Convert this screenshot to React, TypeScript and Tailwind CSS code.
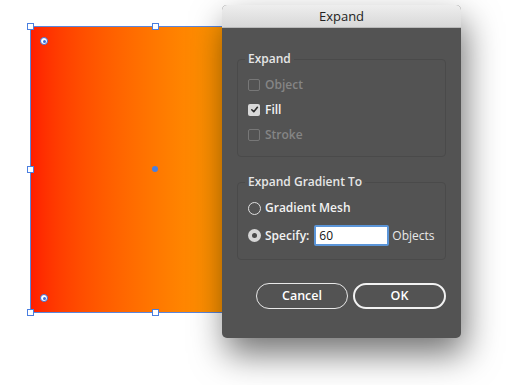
export default function App() {
  return (
    <div className="relative w-[517px] h-[385px] bg-white overflow-hidden" style={{ fontFamily: '"Open Sans", "Liberation Sans", sans-serif' }}>
      {/* artboard object */}
      <div className="absolute left-[30px] top-[26px] w-[252px] h-[287px] border border-[#5a86dc] bg-gradient-to-r from-[#ff1e00] via-[#ff7800] to-[#ffb000]" />
      {/* bounding box handles */}
      <div className="absolute left-[27px] top-[23px] w-[7px] h-[7px] bg-white border border-[#4a7fe0]" />
      <div className="absolute left-[152px] top-[23px] w-[7px] h-[7px] bg-white border border-[#4a7fe0]" />
      <div className="absolute left-[27px] top-[166px] w-[7px] h-[7px] bg-white border border-[#4a7fe0]" />
      <div className="absolute left-[27px] top-[309px] w-[7px] h-[7px] bg-white border border-[#4a7fe0]" />
      <div className="absolute left-[152px] top-[309px] w-[7px] h-[7px] bg-white border border-[#4a7fe0]" />
      <div className="absolute left-[152px] top-[166px] w-[6px] h-[6px] rounded-full bg-[#4a7fe0]" />
      {/* corner widgets */}
      <div className="absolute left-[40px] top-[37px] w-[8px] h-[8px] rounded-full bg-white border border-[#3f6fd6] flex items-center justify-center">
        <div className="w-[3px] h-[3px] rounded-full bg-[#3f6fd6]" />
      </div>
      <div className="absolute left-[40px] top-[294px] w-[8px] h-[8px] rounded-full bg-white border border-[#3f6fd6] flex items-center justify-center">
        <div className="w-[3px] h-[3px] rounded-full bg-[#3f6fd6]" />
      </div>

      {/* dialog */}
      <div className="absolute left-[222px] top-[5px] w-[239px] h-[333px] rounded-[5px] bg-[#535353] shadow-[4px_16px_34px_rgba(0,0,0,0.55)] flex flex-col">
        <div className="h-[23px] rounded-t-[5px] bg-gradient-to-b from-[#eeeeee] to-[#d8d8d8] border-b border-[#b9b9b9] flex items-center justify-center text-[13px] text-[#222] leading-none">
          Expand
        </div>
        <div className="px-[15px] flex flex-col">
          <fieldset className="mt-[23px] border border-[#4a4a4a] rounded-[4px] px-[10px] pb-[9px]">
            <legend className="px-[3px] -ml-[3px] text-[12px] leading-[16px] font-semibold text-[#e6e6e6]">Expand</legend>
            <div className="pt-[5px] flex flex-col">
              <div className="h-[25px] flex items-center gap-[5px] text-[12px] font-semibold text-[#858585]">
                <span className="w-[12px] h-[12px] rounded-[2px] border border-[#777]" />
                Object
              </div>
              <div className="h-[25px] flex items-center gap-[5px] text-[12px] font-semibold text-[#f2f2f2]">
                <span className="w-[12px] h-[12px] rounded-[2px] bg-[#d9d9d9] flex items-center justify-center">
                  <svg width="9" height="9" viewBox="0 0 10 10" fill="none" stroke="#2a2a2a" strokeWidth="1.8" strokeLinecap="round" strokeLinejoin="round">
                    <path d="M2 5.3 L4.2 7.5 L8.2 2.6" />
                  </svg>
                </span>
                Fill
              </div>
              <div className="h-[25px] flex items-center gap-[5px] text-[12px] font-semibold text-[#858585]">
                <span className="w-[12px] h-[12px] rounded-[2px] border border-[#777]" />
                Stroke
              </div>
            </div>
          </fieldset>

          <fieldset className="mt-[17px] border border-[#4a4a4a] rounded-[4px] px-[10px] pb-[10px]">
            <legend className="px-[3px] -ml-[3px] text-[12px] leading-[16px] font-semibold text-[#e6e6e6]">Expand Gradient To</legend>
            <div className="pt-[6px] flex flex-col">
              <div className="h-[24px] flex items-center gap-[4px] text-[12px] font-semibold text-[#f2f2f2]">
                <span className="w-[13px] h-[13px] rounded-full border border-[#e0e0e0]" />
                Gradient Mesh
              </div>
              <div className="mt-[2px] h-[27px] flex items-center text-[12px] font-semibold text-[#f2f2f2]">
                <span className="w-[13px] h-[13px] rounded-full bg-[#d6d6d6] flex items-center justify-center">
                  <span className="w-[5px] h-[5px] rounded-full bg-[#4a4a4a]" />
                </span>
                <span className="ml-[4px]">Specify:</span>
                <input
                  readOnly
                  value="60"
                  className="ml-[5px] w-[75px] h-[21px] bg-white border-2 border-[#5b95d8] rounded-[2px] px-[3px] text-[12px] font-normal text-[#111] outline-none"
                />
                <span className="ml-[3px] font-normal text-[#e8e8e8]">Objects</span>
              </div>
            </div>
          </fieldset>

          <div className="mt-[23px] pl-[19px] flex gap-[5px]">
            <button className="w-[92px] h-[26px] rounded-full border-[1.5px] border-[#e8e8e8] text-[12.5px] font-semibold text-white">Cancel</button>
            <button className="w-[93px] h-[26px] rounded-full border-2 border-[#f2f2f2] text-[12.5px] font-semibold text-white">OK</button>
          </div>
        </div>
      </div>
    </div>
  );
}
